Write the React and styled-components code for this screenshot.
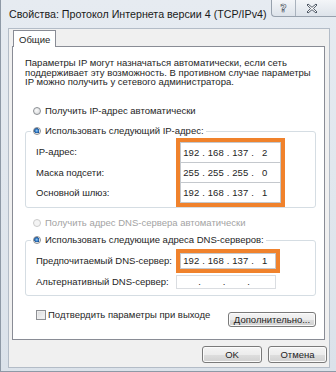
import React from 'react'
import styled, { createGlobalStyle } from 'styled-components'

const GlobalStyle = createGlobalStyle`
  html, body {
    margin: 0;
    padding: 0;
    background: #ffffff;
  }
  body {
    font-family: "Liberation Sans", "DejaVu Sans", sans-serif;
    color: #1e1e1e;
  }
`

const Window = styled.div`
  width: 336px;
  height: 372px;
  box-sizing: border-box;
  padding: 0 6px 3px 7px;
  background: linear-gradient(to bottom, #e6ebf1, #dbe2ea);
  border-left: 1px solid #8e99a6;
  border-bottom: 1px solid #8e99a6;
  display: flex;
  flex-direction: column;
  overflow: hidden;
`

const TitleBar = styled.div`
  height: 28px;
  flex-shrink: 0;
  display: flex;
  align-items: flex-start;
`

const Title = styled.div`
  padding: 8px 0 0 1px;
  font-size: 10.7px;
  color: #1a1a1a;
  white-space: nowrap;
`

const CaptionButtons = styled.div`
  margin-left: auto;
  margin-right: -6px;
  display: flex;
  height: 16px;
  border: 1px solid #97a1ad;
  border-top: none;
  border-right: none;
  border-radius: 0 0 0 4px;
  overflow: hidden;
  background: linear-gradient(to bottom, #f3f5f8, #dde3ea);
`

const CaptionButton = styled.div`
  width: ${p => p.$w}px;
  box-sizing: border-box;
  padding-right: ${p => p.$pr || 0}px;
  display: flex;
  align-items: center;
  justify-content: center;
  & + & {
    border-left: 1px solid #a9b2bd;
  }
`

const HelpGlyph = styled.span`
  font-family: "DejaVu Sans", sans-serif;
  font-size: 11px;
  font-weight: bold;
  color: #ffffff;
  -webkit-text-stroke: 0.7px #5b6571;
  line-height: 1;
`

const Client = styled.div`
  flex: 1;
  background: #f0f0f0;
  border: 1px solid #b3bcc7;
  padding: 1px 4px 0 3px;
  display: flex;
  flex-direction: column;
`

const TabStrip = styled.div`
  display: flex;
  padding-left: 1px;
`

const Tab = styled.div`
  position: relative;
  z-index: 1;
  height: 17px;
  margin-bottom: -1px;
  padding: 0 5px;
  box-sizing: border-box;
  background: #ffffff;
  border: 1px solid #898c95;
  border-bottom: none;
  font-size: 9.5px;
  display: flex;
  align-items: center;
`

const Panel = styled.div`
  height: 294px;
  box-sizing: border-box;
  background: #ffffff;
  border: 1px solid #898c95;
  padding: 11px 0 0 12px;
  display: flex;
  flex-direction: column;
`

const Description = styled.div`
  font-size: 9.5px;
  line-height: 9.5px;
  white-space: nowrap;
`

const OptionRow = styled.div`
  display: flex;
  padding-left: 8px;
  margin-top: ${p => p.$top}px;
`

const Option = styled.label`
  display: flex;
  align-items: center;
  gap: 4px;
  height: 14px;
  font-size: 9.5px;
  white-space: nowrap;
  color: ${p => (p.$disabled ? '#a3a3a3' : '#1e1e1e')};
`

const RadioDot = styled.span`
  width: 8px;
  height: 8px;
  box-sizing: border-box;
  border-radius: 50%;
  border: 1px solid ${p => (p.$disabled ? '#cbcbcb' : '#8c8f93')};
  background: ${p =>
    p.$checked
      ? 'radial-gradient(circle at 45% 45%, #9fd2f6 0, #2f78c4 1.6px, #1b4f8f 2.6px, #e9e9e9 2.8px, #f6f6f6 100%)'
      : p.$disabled
      ? '#f4f4f4'
      : 'radial-gradient(circle at 40% 40%, #fafafa, #d3d5d8)'};
`

const GroupBox = styled.div`
  width: 291px;
  box-sizing: border-box;
  margin-top: ${p => p.$top}px;
  border: 1px solid #d5dde3;
  border-radius: 3px;
  padding-bottom: ${p => p.$bottom || 0}px;
  display: flex;
  flex-direction: column;
`

const Legend = styled.div`
  align-self: flex-start;
  margin: -8px 0 0 5px;
  padding: 0 2px;
  background: #ffffff;
`

const FieldColumns = styled.div`
  display: flex;
  padding-left: 10px;
`

const LabelColumn = styled.div`
  width: 140px;
  padding-top: 4px;
  display: flex;
  flex-direction: column;
`

const FieldLabel = styled.div`
  width: ${p => p.$w || 'auto'};
  height: ${p => p.$h}px;
  display: flex;
  align-items: center;
  font-size: 9.5px;
  white-space: nowrap;
`

const Highlight = styled.div`
  border: 4px solid #f0822c;
  display: flex;
  flex-direction: column;
`

const FieldRow = styled.div`
  display: flex;
  align-items: center;
  padding-left: 10px;
  margin-top: 2px;
`

const IpBox = styled.div`
  width: ${p => p.$w}px;
  height: ${p => p.$h}px;
  box-sizing: border-box;
  border: 1px solid ${p => (p.$faint ? '#dadde1' : '#c4c8cd')};
  background: #ffffff;
  display: flex;
  align-items: center;
  font-size: 9.5px;
  & + & {
    margin-top: -1px;
  }
`

const Octet = styled.span`
  width: 20.5px;
  text-align: center;
`

const Dot = styled.span`
  width: 4px;
  text-align: center;
`

const BottomRow = styled.div`
  display: flex;
  align-items: flex-start;
  margin-top: 14px;
  padding-left: 11px;
  padding-right: 8px;
`

const Check = styled.label`
  display: flex;
  align-items: center;
  gap: 2px;
  height: 10px;
  font-size: 9.5px;
  white-space: nowrap;
`

const CheckBox = styled.span`
  width: 10px;
  height: 10px;
  box-sizing: border-box;
  border: 1px solid #8e9094;
  background: linear-gradient(135deg, #d9dadc, #f8f8f8);
  box-shadow: inset 0 0 0 1px #eeeeee;
`

const Button = styled.button`
  width: ${p => p.$w}px;
  height: ${p => p.$h}px;
  margin: ${p => p.$m || 0};
  padding: 0;
  box-sizing: border-box;
  border: 1px solid #7a7a7a;
  border-radius: 3px;
  background: linear-gradient(to bottom, #f4f4f4 0%, #ececec 50%, #dedede 51%, #d0d0d0 100%);
  box-shadow: inset 0 0 0 1px #fbfbfb;
  font-family: "Liberation Sans", "DejaVu Sans", sans-serif;
  font-size: 9.5px;
  color: #1e1e1e;
`

const Footer = styled.div`
  display: flex;
  justify-content: flex-end;
  gap: 6px;
  margin: 6px -2px 0 0;
`

function IpValue({ parts }) {
  return (
    <>
      {parts.map((p, i) => (
        <React.Fragment key={i}>
          <Octet>{p}</Octet>
          {i < 3 && <Dot>.</Dot>}
        </React.Fragment>
      ))}
    </>
  )
}

function Radio({ checked, disabled, children }) {
  return (
    <Option $disabled={disabled}>
      <RadioDot $checked={checked} $disabled={disabled} />
      {children}
    </Option>
  )
}

const ipRows = [
  { label: 'IP-адрес:', parts: ['192', '168', '137', '2'] },
  { label: 'Маска подсети:', parts: ['255', '255', '255', '0'] },
  { label: 'Основной шлюз:', parts: ['192', '168', '137', '1'] },
]

export default function App() {
  return (
    <>
      <GlobalStyle />
      <Window>
        <TitleBar>
          <Title>Свойства: Протокол Интернета версии 4 (TCP/IPv4)</Title>
          <CaptionButtons>
            <CaptionButton $w={23}>
              <HelpGlyph>?</HelpGlyph>
            </CaptionButton>
            <CaptionButton $w={41} $pr={9}>
              <svg width="12" height="11" viewBox="0 0 12 11">
                <path
                  d="M1 2 L2 1 L6 4.3 L10 1 L11 2 L7.4 5.5 L11 9 L10 10 L6 6.7 L2 10 L1 9 L4.6 5.5 Z"
                  fill="#ffffff"
                  stroke="#4f5966"
                  strokeWidth="1"
                  strokeLinejoin="round"
                />
              </svg>
            </CaptionButton>
          </CaptionButtons>
        </TitleBar>
        <Client>
          <TabStrip>
            <Tab>Общие</Tab>
          </TabStrip>
          <Panel>
            <Description>
              Параметры IP могут назначаться автоматически, если сеть
              <br />
              поддерживает эту возможность. В противном случае параметры
              <br />
              IP можно получить у сетевого администратора.
            </Description>

            <OptionRow $top={17}>
              <Radio>Получить IP-адрес автоматически</Radio>
            </OptionRow>

            <GroupBox $top={13}>
              <Legend>
                <Radio checked>Использовать следующий IP-адрес:</Radio>
              </Legend>
              <FieldColumns>
                <LabelColumn>
                  {ipRows.map(r => (
                    <FieldLabel key={r.label} $h={20.5}>
                      {r.label}
                    </FieldLabel>
                  ))}
                </LabelColumn>
                <Highlight>
                  {ipRows.map(r => (
                    <IpBox key={r.label} $w={101} $h={21}>
                      <IpValue parts={r.parts} />
                    </IpBox>
                  ))}
                </Highlight>
              </FieldColumns>
            </GroupBox>

            <OptionRow $top={8}>
              <Radio disabled>Получить адрес DNS-сервера автоматически</Radio>
            </OptionRow>

            <GroupBox $top={10} $bottom={6}>
              <Legend>
                <Radio checked>Использовать следующие адреса DNS-серверов:</Radio>
              </Legend>
              <FieldRow>
                <FieldLabel $w="140px" $h={24}>
                  Предпочитаемый DNS-сервер:
                </FieldLabel>
                <Highlight>
                  <IpBox $w={96} $h={16}>
                    <IpValue parts={['192', '168', '137', '1']} />
                  </IpBox>
                </Highlight>
              </FieldRow>
              <FieldRow>
                <FieldLabel $w="140px" $h={14}>
                  Альтернативный DNS-сервер:
                </FieldLabel>
                <IpBox $w={100} $h={14} $faint>
                  <IpValue parts={['', '', '', '']} />
                </IpBox>
              </FieldRow>
            </GroupBox>

            <BottomRow>
              <Check>
                <CheckBox />
                Подтвердить параметры при выходе
              </Check>
              <Button $w={88} $h={15} $m="2px 0 0 auto">
                Дополнительно...
              </Button>
            </BottomRow>
          </Panel>
          <Footer>
            <Button $w={60} $h={17}>
              OK
            </Button>
            <Button $w={59} $h={17}>
              Отмена
            </Button>
          </Footer>
        </Client>
      </Window>
    </>
  )
}
